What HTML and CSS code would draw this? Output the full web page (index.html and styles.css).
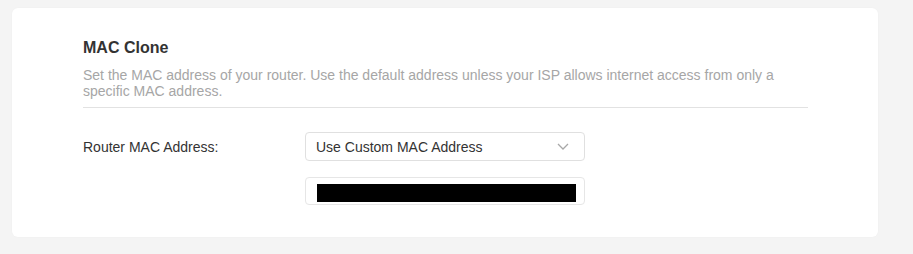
FILE: index.html
```html
<!DOCTYPE html>
<html lang="en">
<head>
<meta charset="utf-8">
<title>MAC Clone</title>
<link rel="stylesheet" href="styles.css">
</head>
<body>
<div class="page">
  <section class="card">
    <header class="section-head">
      <h2 class="title">MAC Clone</h2>
      <p class="desc">Set the MAC address of your router. Use the default address unless your ISP allows internet access from only a specific MAC address.</p>
    </header>
    <div class="form">
      <div class="row">
        <label class="label">Router MAC Address:</label>
        <div class="select">
          <span class="select-text">Use Custom MAC Address</span>
          <svg class="chevron" width="12" height="7" viewBox="0 0 12 7"><path d="M1 1l5 5 5-5" fill="none" stroke="#a8a8a8" stroke-width="1.3"/></svg>
        </div>
      </div>
      <div class="row">
        <span class="label"></span>
        <div class="input"><span class="redact"></span></div>
      </div>
    </div>
  </section>
</div>
</body>
</html>
```
FILE: styles.css
```css
html, body {
  margin: 0;
  padding: 0;
  background: #f4f4f4;
  font-family: "Liberation Sans", Arial, sans-serif;
}
.page {
  padding: 8px 35px 17px 12px;
}
.card {
  background: #fff;
  border-radius: 6px;
  padding: 30px 70px 32px 71px;
  box-shadow: 0 0 2px rgba(0,0,0,0.03);
}
.section-head {
  border-bottom: 1px solid #e2e2e2;
  padding-bottom: 8px;
}
.title {
  margin: 0;
  font-size: 16px;
  line-height: 20px;
  font-weight: bold;
  color: #333;
}
.desc {
  margin: 9px 0 0;
  font-size: 14px;
  line-height: 16px;
  color: #a6a6a6;
}
.form {
  padding-top: 24px;
  display: flex;
  flex-direction: column;
  gap: 16px;
}
.row {
  display: flex;
  align-items: center;
}
.label {
  width: 222px;
  font-size: 14px;
  color: #333;
}
.select {
  box-sizing: border-box;
  width: 280px;
  height: 29px;
  border: 1px solid #e0e0e0;
  border-radius: 4px;
  display: flex;
  align-items: center;
  justify-content: space-between;
  padding: 0 15px 0 10px;
}
.select-text {
  font-size: 14px;
  color: #333;
}
.chevron {
  display: block;
}
.input {
  box-sizing: border-box;
  width: 280px;
  height: 28px;
  border: 1px solid #e6e6e6;
  border-radius: 4px;
  padding: 6px 8px 2px 11px;
}
.redact {
  display: block;
  width: 259px;
  height: 18px;
  background: #000;
}
```
